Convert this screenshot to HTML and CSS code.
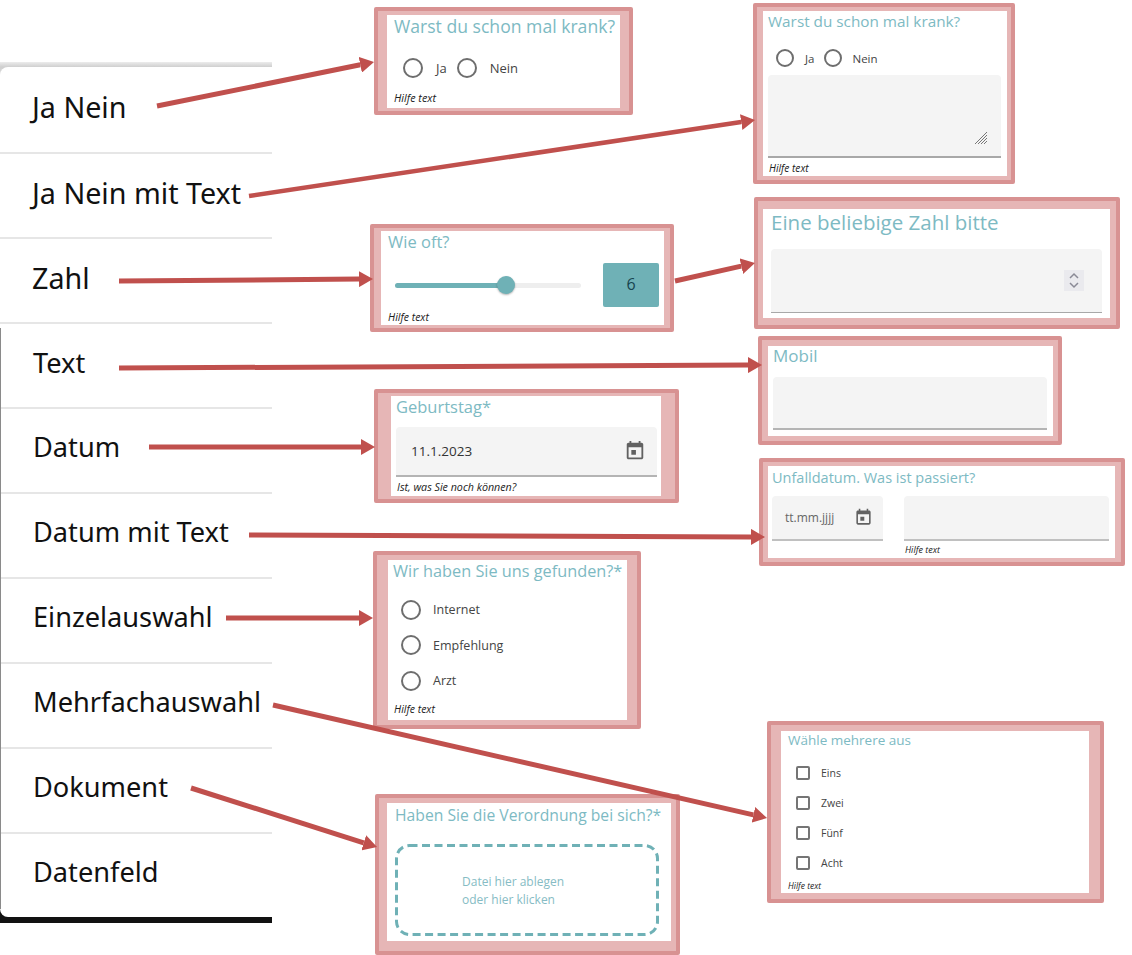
FILE: index.html
```html
<!DOCTYPE html>
<html lang="de">
<head>
    <meta charset="UTF-8">
    <meta name="viewport" content="width=device-width, initial-scale=1.0">
    <title>Feldtypen</title>
    <link rel="stylesheet" href="styles.css">
</head>
<body>
    <div class="menu">
        <ul class="menu-list">
            <li>Ja Nein</li>
            <li>Ja Nein mit Text</li>
            <li>Zahl</li>
            <li>Text</li>
            <li>Datum</li>
            <li>Datum mit Text</li>
            <li>Einzelauswahl</li>
            <li>Mehrfachauswahl</li>
            <li>Dokument</li>
            <li>Datenfeld</li>
        </ul>
    </div>

    <section class="card card-janein">
        <div class="card-body">
            <h2 class="title">Warst du schon mal krank?</h2>
            <div class="radio-row">
                <span class="radio"></span><span class="opt-ja">Ja</span>
                <span class="radio"></span><span>Nein</span>
            </div>
            <p class="hint">Hilfe text</p>
        </div>
    </section>

    <section class="card card-janein-text">
        <div class="card-body">
            <h2 class="title">Warst du schon mal krank?</h2>
            <div class="radio-row">
                <span class="radio"></span><span class="opt-ja">Ja</span>
                <span class="radio"></span><span>Nein</span>
            </div>
            <div class="field textarea">
                <svg class="resizer" viewBox="0 0 12 12" width="12" height="12">
                    <path d="M0 12 12 0M3 12l9-9M6 12l6-6M9 12l3-3" stroke="#777" stroke-width="1" fill="none"/>
                </svg>
            </div>
            <p class="hint">Hilfe text</p>
        </div>
    </section>

    <section class="card card-slider">
        <div class="card-body">
            <h2 class="title">Wie oft?</h2>
            <div class="slider-row">
                <div class="slider">
                    <div class="slider-fill"></div>
                    <div class="slider-thumb"></div>
                </div>
                <div class="slider-value">6</div>
            </div>
            <p class="hint">Hilfe text</p>
        </div>
    </section>

    <section class="card card-zahl">
        <div class="card-body">
            <h2 class="title">Eine beliebige Zahl bitte</h2>
            <div class="field number">
                <div class="spinner">
                    <svg viewBox="0 0 20 21" width="20" height="21">
                        <path d="M6 8l4-4 4 4M6 13l4 4 4-4" stroke="#8a8a96" stroke-width="1.5" fill="none"/>
                    </svg>
                </div>
            </div>
        </div>
    </section>

    <section class="card card-mobil">
        <div class="card-body">
            <h2 class="title">Mobil</h2>
            <div class="field"></div>
        </div>
    </section>

    <section class="card card-geburtstag">
        <div class="card-body">
            <h2 class="title">Geburtstag*</h2>
            <div class="field date">
                <span>11.1.2023</span>
                <svg class="cal" viewBox="0 0 24 24" width="22" height="22">
                    <path d="M13 11H8v5h5zM16 1v2H8V1H6v2H5c-1.100 0-2 .9-2 2v14c0 1.100.9 2 2 2h14c1.100 0 2-.9 2-2V5c0-1.100-.9-2-2-2h-1V1zm3 18H5V8h14z" fill="#616161"/>
                </svg>
            </div>
            <p class="hint">Ist, was Sie noch können?</p>
        </div>
    </section>

    <section class="card card-unfall">
        <div class="card-body">
            <h2 class="title">Unfalldatum. Was ist passiert?</h2>
            <div class="date-row">
                <div class="field date date-small">
                    <span>tt.mm.jjjj</span>
                    <svg class="cal" viewBox="0 0 24 24" width="19" height="19">
                        <path d="M13 11H8v5h5zM16 1v2H8V1H6v2H5c-1.100 0-2 .9-2 2v14c0 1.100.9 2 2 2h14c1.100 0 2-.9 2-2V5c0-1.100-.9-2-2-2h-1V1zm3 18H5V8h14z" fill="#616161"/>
                    </svg>
                </div>
                <div class="date-text">
                    <div class="field"></div>
                    <p class="hint">Hilfe text</p>
                </div>
            </div>
        </div>
    </section>

    <section class="card card-einzel">
        <div class="card-body">
            <h2 class="title">Wir haben Sie uns gefunden?*</h2>
            <ul class="radio-list">
                <li><span class="radio"></span>Internet</li>
                <li><span class="radio"></span>Empfehlung</li>
                <li><span class="radio"></span>Arzt</li>
            </ul>
            <p class="hint">Hilfe text</p>
        </div>
    </section>

    <section class="card card-dokument">
        <div class="card-body">
            <h2 class="title">Haben Sie die Verordnung bei sich?*</h2>
            <div class="dropzone">
                <svg class="dropzone-line" viewBox="0 0 264 92" width="264" height="92">
                    <rect x="1.500" y="1.500" width="261" height="89" rx="13" fill="none" stroke="#6fb1b6" stroke-width="3" stroke-dasharray="8 4.500"/>
                </svg>
                Datei hier ablegen<br>oder hier klicken
            </div>
        </div>
    </section>

    <section class="card card-mehrfach">
        <div class="card-body">
            <h2 class="title">Wähle mehrere aus</h2>
            <ul class="check-list">
                <li><span class="check"></span>Eins</li>
                <li><span class="check"></span>Zwei</li>
                <li><span class="check"></span>Fünf</li>
                <li><span class="check"></span>Acht</li>
            </ul>
            <p class="hint">Hilfe text</p>
        </div>
    </section>

    <svg class="arrows" viewBox="0 0 1132 955" width="1132" height="955">
        <defs>
            <marker id="head" viewBox="0 0 14 16" markerUnits="userSpaceOnUse" markerWidth="14" markerHeight="16" refX="0" refY="8" orient="auto">
                <path d="M0 0 14 8 0 16z" fill="#c0504d"/>
            </marker>
        </defs>
        <g stroke="#c0504d" stroke-width="5">
            <line x1="157" y1="106" x2="360.300" y2="64.800" marker-end="url(#head)"/>
            <line x1="249" y1="196" x2="741.200" y2="122.100" stroke-width="4.500" marker-end="url(#head)"/>
            <line x1="119" y1="281" x2="359" y2="279.100" marker-end="url(#head)"/>
            <line x1="675" y1="281" x2="741.300" y2="266.100" marker-end="url(#head)"/>
            <line x1="119" y1="368" x2="748" y2="365.100" marker-end="url(#head)"/>
            <line x1="149" y1="447" x2="361" y2="447" marker-end="url(#head)"/>
            <line x1="249" y1="535" x2="751" y2="536.900" marker-end="url(#head)"/>
            <line x1="226" y1="618" x2="359" y2="618" marker-end="url(#head)"/>
            <line x1="273" y1="705" x2="753.400" y2="814.900" marker-end="url(#head)"/>
            <line x1="191" y1="788" x2="363.700" y2="842.800" marker-end="url(#head)"/>
        </g>
    </svg>
</body>
</html>
```
FILE: styles.css
```css
body {
    margin: 0;
    background: #fff;
    font-family: "Open Sans", Arial, sans-serif;
    color: #333;
}
h2, p, ul {
    margin: 0;
    padding: 0;
}
ul {
    list-style: none;
}

/* menu on the left */
.menu {
    position: absolute;
    left: 0;
    top: 62px;
    width: 272px;
    padding: 5px 0 6px;
    background: linear-gradient(#ececec, #cfcfcf 5px, #dedede 14px, #fff 14px, #fff 50%, #111 50%);
}
.menu::after {
    content: "";
    position: absolute;
    left: 0;
    top: 266px;
    bottom: 14px;
    width: 1px;
    background: #8a8a8a;
}
.menu-list {
    background: #fff;
    border-radius: 8px 0 0 8px;
    font-family: "Noto Sans", Arial, sans-serif;
    font-size: 27.200px;
    color: #111;
}
.menu-list li {
    box-sizing: border-box;
    height: 85px;
    padding: 0 0 8px 33px;
    display: flex;
    align-items: center;
    border-bottom: 2px solid #e6e6e6;
    white-space: nowrap;
}
.menu-list li:nth-child(-n+3) {
    font-size: 28.700px;
    padding: 0 0 7px 32px;
}
.menu-list li:nth-child(4) {
    padding-bottom: 7px;
}
.menu-list li:first-child {
    height: 87px;
}
.menu-list li:last-child {
    height: 83px;
    border-bottom: none;
}

/* cards */
.card {
    position: absolute;
    box-sizing: border-box;
    border: 4px solid #d89292;
    border-radius: 2px;
    background: #e6b6b6;
    display: flex;
}
.card-body {
    flex: 1;
    background: #fff;
    display: flex;
    flex-direction: column;
    min-width: 0;
}
.title {
    font-weight: 400;
    color: #7dbac3;
    white-space: nowrap;
}
.hint {
    font-style: italic;
    color: #222;
    font-size: 10.500px;
    line-height: 14px;
    white-space: nowrap;
}

/* radio and checkbox */
.radio {
    box-sizing: border-box;
    width: 20px;
    height: 20px;
    border: 2px solid #6e6e6e;
    border-radius: 50%;
    flex: none;
}
.radio-row {
    display: flex;
    align-items: center;
    font-size: 13px;
    color: #444;
}
.check {
    box-sizing: border-box;
    width: 14px;
    height: 14px;
    border: 2px solid #757575;
    border-radius: 2px;
    flex: none;
}

/* grey input */
.field {
    box-sizing: border-box;
    background: #f4f4f4;
    border-radius: 4px 4px 0 0;
    border-bottom: 1px solid #a8a8a8;
}

/* Ja Nein */
.card-janein {
    left: 374px;
    top: 7px;
    width: 259px;
    height: 108px;
    padding: 4px 9px 3px;
}
.card-janein .card-body {
    padding: 0 0 0 7px;
}
.card-janein .title {
    font-size: 17.600px;
    line-height: 22px;
}
.card-janein .radio-row {
    margin: 21px 0 0 9px;
}
.card-janein .opt-ja {
    margin: 0 10px 0 13px;
}
.card-janein .radio-row span:last-child {
    margin-left: 13px;
}
.card-janein .hint {
    margin-top: 13px;
    font-size: 10.800px;
}

/* Ja Nein mit Text */
.card-janein-text {
    left: 753px;
    top: 3px;
    width: 262px;
    height: 181px;
    padding: 4px 4px 4px 6px;
}
.card-janein-text .card-body {
    padding: 0 6px 0 5px;
}
.card-janein-text .title {
    font-size: 15.300px;
    line-height: 21px;
}
.card-janein-text .radio-row {
    margin: 17px 0 0 8px;
    font-size: 11.500px;
}
.card-janein-text .radio {
    width: 18px;
    height: 18px;
}
.card-janein-text .opt-ja {
    margin: 0 10px 0 11px;
}
.card-janein-text .radio-row span:last-child {
    margin-left: 10px;
}
.textarea {
    height: 83px;
    margin-top: 8px;
    border-bottom-width: 2px;
    display: flex;
    justify-content: flex-end;
    align-items: flex-end;
}
.resizer {
    margin: 0 14px 12px 0;
}
.card-janein-text .hint {
    margin: 3px 0 0 1px;
    font-size: 10.200px;
}

/* slider */
.card-slider {
    left: 370px;
    top: 224px;
    width: 304px;
    height: 108px;
    padding: 3px 6px 3px 7px;
}
.card-slider .card-body {
    padding-left: 7px;
}
.card-slider .title {
    font-size: 16.500px;
    line-height: 22px;
}
.slider-row {
    display: flex;
    align-items: center;
    margin-top: 10px;
}
.slider {
    position: relative;
    width: 186px;
    height: 5px;
    margin-left: 7px;
    background: #eee;
    border-radius: 3px;
}
.slider-fill {
    width: 111px;
    height: 100%;
    background: #6fb1b6;
    border-radius: 3px;
}
.slider-thumb {
    position: absolute;
    left: 102px;
    top: -7px;
    width: 18px;
    height: 18px;
    border-radius: 50%;
    background: #6fb1b6;
    box-shadow: 0 1px 2px rgba(0, 0, 0, 0.3);
}
.slider-value {
    width: 56px;
    height: 44px;
    margin-left: 22px;
    padding-bottom: 2px;
    box-sizing: border-box;
    background: #6fb1b6;
    border-radius: 2px;
    display: flex;
    align-items: center;
    justify-content: center;
    font-size: 16px;
    color: #17444f;
}
.card-slider .hint {
    margin-top: 3px;
}

/* Zahl */
.card-zahl {
    left: 754px;
    top: 197px;
    width: 366px;
    height: 132px;
    padding: 8px 6px 7px 5px;
}
.card-zahl .card-body {
    padding: 0 8px;
}
.card-zahl .title {
    font-size: 20.500px;
    line-height: 26px;
}
.number {
    height: 64px;
    margin-top: 14px;
    display: flex;
    justify-content: flex-end;
    align-items: center;
    padding-right: 18px;
}
.spinner {
    width: 20px;
    height: 21px;
    background: #eaeaee;
    display: flex;
}

/* Mobil */
.card-mobil {
    left: 758px;
    top: 336px;
    width: 304px;
    height: 109px;
    padding: 6px 5px 5px 6px;
}
.card-mobil .card-body {
    padding: 0 6px 0 5px;
}
.card-mobil .title {
    font-size: 17px;
    line-height: 20px;
}
.card-mobil .field {
    height: 53px;
    margin-top: 11px;
    border-bottom-width: 2px;
    border-bottom-color: #b4b4b4;
}

/* Datum */
.date {
    display: flex;
    align-items: center;
    justify-content: space-between;
}
.card-geburtstag {
    left: 374px;
    top: 389px;
    width: 305px;
    height: 114px;
    padding: 3px 14px 3px 13px;
}
.card-geburtstag .card-body {
    padding: 0 4px 0 5px;
}
.card-geburtstag .title {
    font-size: 16.500px;
    line-height: 22px;
}
.card-geburtstag .field {
    height: 50px;
    margin-top: 9px;
    padding: 0 11px 0 15px;
    border-bottom-width: 2px;
    border-bottom-color: #b4b4b4;
    font-size: 13.500px;
}
.card-geburtstag .hint {
    margin: 3px 0 0 1px;
    font-size: 10.700px;
}

/* Datum mit Text */
.card-unfall {
    left: 759px;
    top: 458px;
    width: 366px;
    height: 108px;
    padding: 4px 6px 4px 5px;
}
.card-unfall .card-body {
    padding: 0 6px 0 4px;
}
.card-unfall .title {
    font-size: 14.500px;
    line-height: 23px;
}
.date-row {
    display: flex;
    gap: 21px;
    margin-top: 7px;
}
.date-small {
    width: 111px;
    height: 45px;
    padding: 0 10px 0 13px;
    border-bottom-width: 2px;
    border-bottom-color: #c0c0c0;
    font-size: 12px;
    color: #666;
}
.date-text {
    flex: 1;
}
.date-text .field {
    height: 45px;
    border-bottom-width: 2px;
    border-bottom-color: #c0c0c0;
}
.date-text .hint {
    margin: 2px 0 0 1px;
    font-size: 9px;
    line-height: 13px;
}

/* Einzelauswahl */
.card-einzel {
    left: 373px;
    top: 551px;
    width: 268px;
    height: 178px;
    padding: 5px 10px 5px 11px;
}
.card-einzel .card-body {
    padding-left: 5px;
}
.card-einzel .title {
    font-size: 16.300px;
    line-height: 22px;
}
.radio-list {
    margin-top: 10px;
    font-size: 12.500px;
    color: #444;
}
.radio-list li {
    height: 35.500px;
    display: flex;
    align-items: center;
    gap: 12px;
    padding-left: 8px;
}
.card-einzel .hint {
    margin: 3px 0 0 1px;
}

/* Dokument */
.card-dokument {
    left: 375px;
    top: 794px;
    width: 305px;
    height: 161px;
    padding: 5px 5px 10px 8px;
}
.card-dokument .card-body {
    padding: 0 8px;
}
.card-dokument .title {
    font-size: 15.700px;
    line-height: 24px;
}
.dropzone {
    position: relative;
    box-sizing: border-box;
    height: 92px;
    width: 264px;
    margin-top: 17px;
    padding: 29px 0 0 67px;
    font-size: 12px;
    line-height: 17.500px;
    color: #86bcc4;
}
.dropzone-line {
    position: absolute;
    left: 0;
    top: 0;
}

/* Mehrfachauswahl */
.card-mehrfach {
    left: 767px;
    top: 721px;
    width: 337px;
    height: 182px;
    padding: 6px 11px 6px 10px;
}
.card-mehrfach .card-body {
    padding-left: 7px;
}
.card-mehrfach .title {
    font-size: 13.500px;
    line-height: 19px;
}
.check-list {
    margin-top: 8px;
    font-size: 10.500px;
    color: #444;
}
.check-list li {
    height: 30px;
    display: flex;
    align-items: center;
    gap: 11px;
    padding-left: 8px;
}
.card-mehrfach .hint {
    margin-top: 2px;
    font-size: 8.500px;
    line-height: 12px;
}

/* arrows lie over everything */
.arrows {
    position: absolute;
    left: 0;
    top: 0;
    pointer-events: none;
}
```
